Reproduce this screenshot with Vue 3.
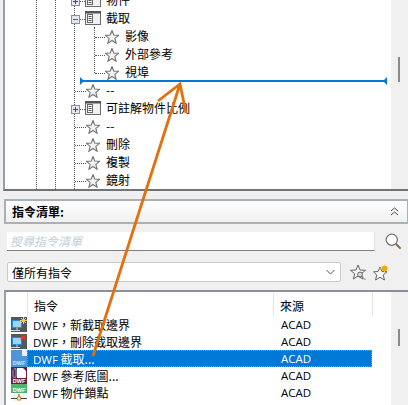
<script setup>
const treeRows = [
  { level: 2, kind: 'group', exp: 'plus', text: '物件' },
  { level: 2, kind: 'group', exp: 'minus', text: '截取' },
  { level: 3, kind: 'star', text: '影像' },
  { level: 3, kind: 'star', text: '外部參考' },
  { level: 3, kind: 'star', text: '視埠' },
  { level: 2, kind: 'star', text: '--' },
  { level: 2, kind: 'group', exp: 'plus', text: '可註解物件比例' },
  { level: 2, kind: 'star', text: '--' },
  { level: 2, kind: 'star', text: '刪除' },
  { level: 2, kind: 'star', text: '複製' },
  { level: 2, kind: 'star', text: '鏡射' },
]
const cmdRows = [
  { icon: 'new', text: '\uFF0C新截取邊界', selected: false },
  { icon: 'del', text: '\uFF0C刪除截取邊界', selected: false },
  { icon: 'clip', text: ' 截取...', selected: true },
  { icon: 'ref', text: ' 參考底圖...', selected: false },
  { icon: 'snap', text: ' 物件鎖點', selected: false },
]
const starPts = '7,.5 8.76,5.07 13.7,5.34 9.85,8.43 11.11,13.3 7,10.5 2.89,13.3 4.15,8.43 .3,5.34 5.24,5.07'
</script>

<template>
  <div class="root">
    <section class="tree">
      <div class="treeBody">
        <i class="guide g1"></i>
        <i class="guide g2"></i>
        <i class="guide g3"></i>
        <i class="guide g4"></i>
        <div class="treeList">
          <div
            v-for="(r, i) in treeRows"
            :key="i"
            class="tRow"
            :class="['lv' + r.level, r.kind]"
          >
            <svg v-if="r.exp" class="exp" width="9" height="9" viewBox="0 0 9 9">
              <rect x=".5" y=".5" width="8" height="8" fill="#e6e8ec" stroke="#8f8f8f" />
              <path v-if="r.exp === 'plus'" d="M2 4.5h5M4.5 2v5" stroke="#2a4b8d" fill="none" />
              <path v-else d="M2 4.5h5" stroke="#3f6a9c" fill="none" />
            </svg>
            <span class="conn"></span>
            <svg v-if="r.kind === 'group'" class="gIcon" width="16" height="14" viewBox="0 0 16 14">
              <rect x=".5" y=".5" width="15" height="13" fill="#f1f1f1" stroke="#6a6a6a" />
              <rect x="0" y="0" width="16" height="2.5" fill="#555" />
              <rect x="2.5" y="3.5" width="5" height="8" fill="#fff" stroke="#666" />
              <path d="M3.5 5.5h3M3.5 7.5h3M3.5 9.5h3" stroke="#555" fill="none" />
            </svg>
            <svg v-else class="sIcon" width="14" height="14" viewBox="0 0 14 14">
              <polygon :points="starPts" fill="#f3f3f3" stroke="#757575" stroke-width="1.1" />
            </svg>
            <span class="tText">{{ r.text }}</span>
          </div>
        </div>
        <div class="dropLine">
          <i class="capL"></i>
          <i class="capR"></i>
        </div>
      </div>
      <div class="vbar">
        <i class="thumb treeThumb"></i>
      </div>
    </section>

    <header class="listHead">
      <strong>指令清單:</strong>
      <svg width="9" height="9" viewBox="0 0 9 9" class="chev">
        <path d="M1 4l3.5-3L8 4M1 8l3.5-3L8 8" fill="none" stroke="#444" />
      </svg>
    </header>

    <div class="searchRow">
      <div class="search">搜尋指令清單</div>
      <svg width="17" height="17" viewBox="0 0 17 17">
        <circle cx="6.8" cy="6.8" r="5.6" fill="#fff" stroke="#6f6f6f" stroke-width="1.2" />
        <path d="M11 11l4.6 4.6" stroke="#8c6a3f" stroke-width="2" fill="none" />
      </svg>
    </div>

    <div class="filterRow">
      <div class="select">
        <span>僅所有指令</span>
        <svg width="9" height="6" viewBox="0 0 9 6">
          <path d="M.5 1l4 4 4-4" fill="none" stroke="#555" />
        </svg>
      </div>
      <svg class="fIcon" width="17" height="17" viewBox="0 0 17 17">
        <polygon points="8,1 10,6 15.5,6.3 11.3,9.7 12.7,15 8,12 3.3,15 4.7,9.7 .5,6.3 6,6" fill="#f5f5f5" stroke="#666" />
        <circle cx="10" cy="10.5" r="2.4" fill="#ddd" stroke="#666" />
        <path d="M12 12.5l3.5 3.5" stroke="#8c6a3f" fill="none" />
      </svg>
      <svg class="fIcon" width="17" height="17" viewBox="0 0 17 17">
        <polygon points="7,3 9,7.5 14,7.8 10.2,11 11.5,16 7,13.3 2.5,16 3.8,11 .5,7.8 5,7.5" fill="#f5f5f5" stroke="#666" />
        <path d="M11.5 .5v8M7.5 4.5h8M9 2l5 5M14 2l-5 5" stroke="#f7d774" fill="none" />
        <circle cx="11.5" cy="4.5" r="2.8" fill="#f5a800" />
      </svg>
    </div>

    <section class="list">
      <div class="listMain">
        <div class="hRow">
          <span class="cIcon"></span>
          <span class="cCmd">指令</span>
          <span class="cSrc">來源</span>
        </div>
        <div v-for="(r, i) in cmdRows" :key="i" class="cRow">
          <svg class="rIcon" width="16" height="17" viewBox="0 0 16 17">
            <template v-if="r.icon === 'new' || r.icon === 'del'">
              <rect y="1" width="16" height="15" fill="#53585e" />
              <rect x="1.5" y="4.5" width="9" height="7" fill="#9fd4f5" stroke="#1f8fdc" />
              <path d="M0 14.5h9M6 11.5v3" stroke="#cfd3d6" fill="none" />
              <path
                v-if="r.icon === 'new'"
                d="M12.5 1v7M9 4.5h7M10 2l5 5M15 2l-5 5"
                stroke="#f6c95c"
                fill="none"
              />
              <path v-else d="M10 2l5 5M15 2l-5 5" stroke="#e0322c" stroke-width="2" fill="none" />
            </template>
            <template v-else-if="r.icon === 'clip'">
              <rect width="16" height="17" fill="#4f96d8" />
              <path d="M11 0h5v6h-5z" fill="#f0f0f0" />
              <text x="8" y="15" text-anchor="middle" class="iTxt" fill="#cfe4f7">DWF</text>
            </template>
            <template v-else-if="r.icon === 'ref'">
              <rect width="16" height="17" fill="#6d1f3a" />
              <path d="M6 1h6l3 3v7H6z" fill="#fff" />
              <path d="M2 3v6a1.5 1.5 0 003 0V2.500a1 1 0 00-2 0" fill="none" stroke="#4fa3e0" stroke-width="1.200" />
              <text x="8" y="16" text-anchor="middle" class="iTxt" fill="#fff">DWF</text>
            </template>
            <template v-else>
              <rect width="16" height="17" fill="#f7f7f7" />
              <rect width="16" height="9" fill="#4fb56a" />
              <text x="8" y="7.500" text-anchor="middle" class="iTxt" fill="#fff">DWF</text>
              <path d="M0 14.500h16M8 10v3" stroke="#444" fill="none" />
              <rect x="6.500" y="13" width="3" height="3" fill="#f2f2f2" stroke="#e58a1f" />
            </template>
          </svg>
          <div class="cBody" :class="{ sel: r.selected }">
            <span class="cCmd"><span class="lat">DWF</span>{{ r.text }}</span>
            <span class="cSrc lat">ACAD</span>
          </div>
        </div>
      </div>
      <div class="vbar listBar">
        <i class="thumb listThumb"></i>
      </div>
    </section>

    <svg class="arrow" width="408" height="405" viewBox="0 0 408 405">
      <path
        d="M93 356L180 84M158 101L180 84L186 113"
        fill="none"
        stroke="#e3700f"
        stroke-width="2.800"
      />
    </svg>
  </div>
</template>

<style>
html,
body {
  margin: 0;
  background: #f0f0f0;
}
</style>

<style scoped>
.root {
  position: relative;
  display: flex;
  flex-direction: column;
  width: 408px;
  height: 405px;
  overflow: hidden;
  background: #f0f0f0;
  color: #000;
  font: 12px/17px "Noto Sans CJK TC", "Noto Sans", sans-serif;
}
.tree {
  display: flex;
  flex: none;
  height: 191px;
  margin-left: 3px;
  box-sizing: border-box;
  border-left: 2px solid #9a9fa5;
  border-bottom: 2px solid #6f7479;
}
.treeBody {
  position: relative;
  flex: 1;
  overflow: hidden;
  background: #fff;
}
.treeList {
  margin-top: -9px;
}
.guide {
  position: absolute;
  top: 0;
  bottom: 0;
  width: 0;
  border-left: 1px dotted #555;
}
.g1 {
  left: 31px;
}
.g2 {
  left: 50px;
}
.g3 {
  left: 69px;
}
.g4 {
  left: 89px;
  top: 27px;
  bottom: auto;
  height: 46px;
}
.tRow {
  position: relative;
  display: flex;
  align-items: center;
  height: 18px;
  line-height: 18px;
  white-space: nowrap;
}
.lv2 {
  padding-left: 70px;
}
.lv2.group {
  padding-left: 66px;
}
.lv3 {
  padding-left: 90px;
}
.exp {
  flex: none;
  margin-top: 3px;
  background: #fff;
}
.conn {
  flex: none;
  width: 11px;
  margin-top: 3px;
  border-top: 1px dotted #555;
}
.group .conn {
  width: 5px;
}
.lv3 .conn {
  width: 10px;
}
.gIcon,
.sIcon {
  flex: none;
}
.sIcon {
  margin-top: 1px;
}
.tText {
  margin-left: 6px;
}
.group .tText {
  margin-left: 5px;
}
.dropLine {
  position: absolute;
  left: 76px;
  width: 305px;
  top: 80px;
  height: 2px;
  background: #0078d7;
}
.capL,
.capR {
  position: absolute;
  top: -3px;
  width: 0;
  height: 0;
  border-top: 4px solid transparent;
  border-bottom: 4px solid transparent;
}
.capL {
  left: -1px;
  border-left: 4px solid #0078d7;
}
.capR {
  right: -1px;
  border-right: 4px solid #0078d7;
}
.vbar {
  position: relative;
  flex: none;
  width: 17px;
  background: #f0f0f0;
}
.thumb {
  position: absolute;
  width: 2px;
  background: #8a8a8a;
}
.treeThumb {
  left: 7px;
  top: 57px;
  height: 25px;
}
.listHead {
  display: flex;
  flex: none;
  align-items: center;
  justify-content: space-between;
  box-sizing: border-box;
  height: 25px;
  margin: 8px 0 0 4px;
  padding: 0 8px 0 6px;
  border: solid #aab0b6;
  border-width: 2px 1px 2px 2px;
  background: linear-gradient(#fff, #f0f0f0);
}
.listHead strong {
  font-size: 12px;
  font-weight: 700;
}
.searchRow {
  display: flex;
  flex: none;
  align-items: center;
  height: 19px;
  margin: 8px 0 0 7px;
  gap: 10px;
}
.search {
  box-sizing: border-box;
  width: 368px;
  height: 19px;
  padding-left: 3px;
  border-right: 1px solid #e2e2e2;
  border-bottom: 1px solid #808080;
  background: #fff;
  color: #c3cfdc;
  font-style: italic;
  line-height: 18px;
}
.filterRow {
  display: flex;
  flex: none;
  align-items: center;
  height: 20px;
  margin: 11px 0 0 7px;
}
.select {
  display: flex;
  align-items: center;
  justify-content: space-between;
  box-sizing: border-box;
  width: 334px;
  height: 20px;
  padding: 0 5px 0 4px;
  border: 1px solid #c8c8c8;
  border-radius: 2px;
  background: #fff;
}
.fIcon {
  flex: none;
  margin-left: 9px;
}
.fIcon + .fIcon {
  margin-left: 6px;
}
.list {
  display: flex;
  flex: 1;
  min-height: 0;
  margin: 8px 0 0 4px;
  border-top: 2px solid #8a9097;
  border-left: 2px solid #9a9fa5;
  background: #fff;
}
.listMain {
  flex: 1;
  min-width: 0;
}
.hRow {
  display: flex;
  height: 24px;
  align-items: center;
}
.hRow .cIcon {
  flex: none;
  width: 21px;
  height: 24px;
  border-right: 1px solid #e5e5e5;
}
.hRow .cCmd {
  width: 246px;
  height: 24px;
  padding-left: 6px;
  box-sizing: border-box;
  line-height: 27px;
  border-right: 1px solid #e5e5e5;
}
.hRow .cSrc {
  width: 99px;
  height: 24px;
  padding-left: 6px;
  box-sizing: border-box;
  line-height: 27px;
  border-right: 1px solid #e5e5e5;
}
.cRow {
  display: flex;
  height: 17px;
  padding-left: 5px;
}
.rIcon {
  flex: none;
}
.cBody {
  display: flex;
  box-sizing: border-box;
  width: 345px;
  height: 17px;
  line-height: 15px;
  border: 1px dotted transparent;
}
.cBody .cCmd {
  width: 246px;
  padding-left: 5px;
  box-sizing: border-box;
  white-space: pre;
}
.cBody .cSrc {
  padding-left: 7px;
}
.sel {
  background: #0078d7;
  color: #fff;
  border-color: #e8862a;
}
.lat {
  font-family: "Open Sans", "Noto Sans", sans-serif;
  font-size: 11.500px;
}
.iTxt {
  font: 700 5.500px "Liberation Sans", sans-serif;
}
.listThumb {
  left: 7px;
  top: 37px;
  height: 17px;
}
.arrow {
  position: absolute;
  left: 0;
  top: 0;
  pointer-events: none;
}
</style>
